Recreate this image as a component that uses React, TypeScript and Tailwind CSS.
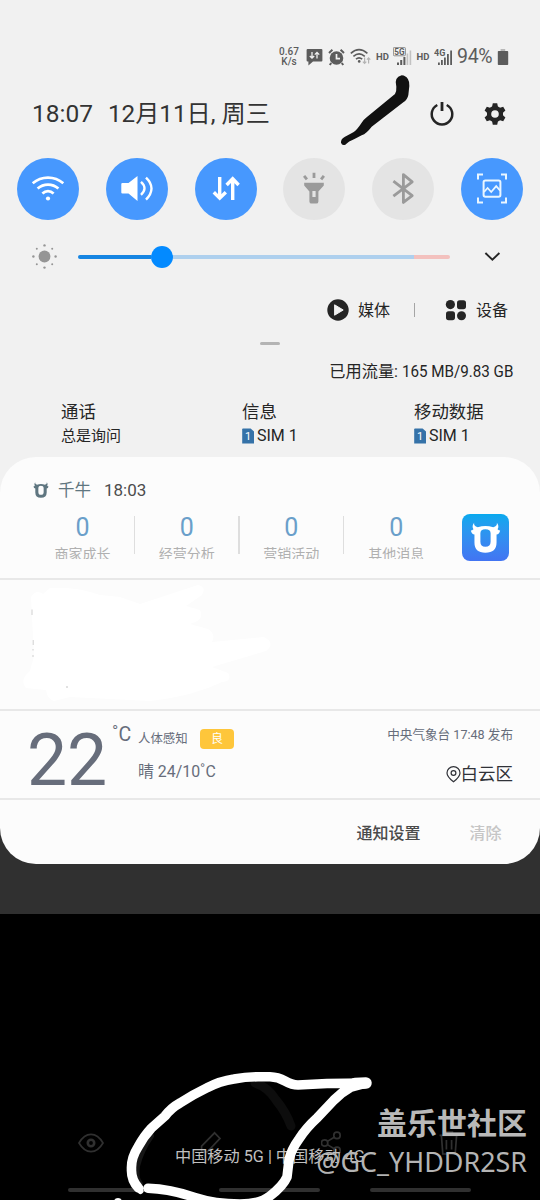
import type { ReactNode } from "react";

interface Toggle {
  name: string;
  active: boolean;
  icon: ReactNode;
}

const toggles: Toggle[] = [
  {
    name: "wifi",
    active: true,
    icon: (
      <svg width="36" height="36" viewBox="0 0 36 36" fill="none" stroke="#fff" strokeWidth="2.7">
        <path d="M2.7 12.3C11.5 4.6 24.5 4.6 33.3 12.3" />
        <path d="M7.6 17.6C13.6 12.2 22.4 12.2 28.4 17.6" />
        <path d="M12.4 22.6C15.8 19.4 20.2 19.4 23.6 22.6" />
        <circle cx="18" cy="27.5" r="2.1" fill="#fff" stroke="none" />
      </svg>
    ),
  },
  {
    name: "sound",
    active: true,
    icon: (
      <svg width="36" height="36" viewBox="0 0 36 36" fill="none" stroke="#fff" strokeWidth="2.4">
        <path d="M3.4 12H9.5L18.5 5V30L9.5 22.6H3.4Q2.3 22.6 2.3 21.5V13Q2.3 12 3.4 12Z" fill="#fff" stroke="none" />
        <path d="M22 10.8Q29 17.2 22 23.8" />
        <path d="M27 6.6Q38 17.2 27 28.6" />
      </svg>
    ),
  },
  {
    name: "data",
    active: true,
    icon: (
      <svg width="36" height="36" viewBox="0 0 36 36" fill="none" stroke="#fff" strokeWidth="3.4">
        <path d="M11.7 6V27M5.8 21.2L11.7 27.2L17.8 21.2" />
        <path d="M24.7 29V8M18.6 14L24.7 7.8L30.6 14" />
      </svg>
    ),
  },
  {
    name: "torch",
    active: false,
    icon: (
      <svg width="36" height="36" viewBox="0 0 36 36" fill="#9a9a9a">
        <path d="M8.2 11.8H27.8V14.4L22.4 20.6V30.4Q22.4 32.6 20.2 32.6H15.6Q13.4 32.6 13.4 30.4V20.6L8.2 14.4Z" />
        <rect x="16.4" y="20" width="3.2" height="6" fill="#e4e4e4" />
        <path d="M16.6 1.8H19.4V7H16.6ZM7 5.8L9.2 4L12 7.6L9.8 9.2ZM26.8 4L29 5.8L26.2 9.2L24 7.6Z" />
      </svg>
    ),
  },
  {
    name: "bluetooth",
    active: false,
    icon: (
      <svg width="36" height="36" viewBox="0 0 36 36" fill="none" stroke="#9a9a9a" strokeWidth="2.8">
        <path d="M8.4 10.2L27.2 24.6L18.4 31.4V3.6L27.2 10.8L8.4 25.2" strokeLinejoin="round" />
      </svg>
    ),
  },
  {
    name: "capture",
    active: true,
    icon: (
      <svg width="36" height="36" viewBox="0 0 36 36" fill="none" stroke="#eaf6ff" strokeWidth="2">
        <path d="M4 8.4V3.4H9M27 3.4H32V8.4M4 26.4V31.4H9M27 31.4H32V26.4" />
        <rect x="9.6" y="9.4" width="16.8" height="16.4" rx="1.8" />
        <path d="M10 21L13.6 17L17.2 21L22.2 15.2L26.2 19.6" strokeWidth="1.8" />
      </svg>
    ),
  },
];

const stats = ["商家成长", "经营分析", "营销活动", "其他消息"];

const SignalBars = ({ label, boxed }: { label: string; boxed?: boolean }) => (
  <svg width="20" height="20" viewBox="0 0 20 20" fill="#5c5c5c">
    {boxed ? (
      <>
        <path d="M4 15.5H6V18H4ZM7.2 13H9.2V18H7.2ZM10.4 10H12.4V18H10.4Z" />
        <path d="M13.6 6.5H15.2V18H13.6ZM16.6 3.5H18.2V18H16.6Z" fill="#c2c2c2" />
        <rect x="0.4" y="0.4" width="12" height="8.4" rx="1" fill="#f1f1f1" stroke="#777" strokeWidth="0.8" />
        <text x="1.3" y="7.6" fontSize="8.2" fontWeight="700">{label}</text>
      </>
    ) : (
      <>
        <text x="0" y="9" fontSize="9" fontWeight="700">{label}</text>
        <path d="M4 15.5H5.8V18H4ZM7 13H8.8V18H7ZM10 10.5H11.8V18H10ZM13 7H14.8V18H13ZM16.2 3.5H18V18H16.2Z" />
      </>
    )}
  </svg>
);

const StatusBar = () => (
  <div className="mt-[46px] flex h-[22px] items-center pl-[278px] text-[#5c5c5c]">
    <div className="w-[22px] text-center text-[10px] font-medium leading-[10px]">
      <div>0.67</div>
      <div>K/s</div>
    </div>
    <svg className="ml-[5.5px]" width="17" height="18" viewBox="0 0 17 18">
      <path d="M1.6 1H15.4Q16.4 1 16.4 2V12.4Q16.4 13.4 15.4 13.4H7L2.4 17.4V13.4H1.6Q0.6 13.4 0.6 12.4V2Q0.6 1 1.6 1Z" fill="#5c5c5c" />
      <path d="M6 4V10.2M3.8 8L6 10.2L8.2 8M11 10.4V4.4M8.8 6.6L11 4.4L13.2 6.6" stroke="#f1f1f1" strokeWidth="1.3" fill="none" />
    </svg>
    <svg className="ml-[5px]" width="17" height="18" viewBox="0 0 17 18">
      <circle cx="8.5" cy="10" r="6.8" fill="#5c5c5c" />
      <path d="M1 5L4.4 1.8M16 5L12.6 1.8M3.2 15L1.8 17M13.8 15L15.2 17" stroke="#5c5c5c" strokeWidth="2" />
      <path d="M8.5 6V10.6H12" stroke="#f1f1f1" strokeWidth="1.7" fill="none" />
    </svg>
    <svg className="ml-[5px]" width="21" height="18" viewBox="0 0 21 18" fill="none" stroke="#5c5c5c" strokeWidth="1.6">
      <path d="M0.8 5.4Q9 -2 17.4 5.4M3.4 8.4Q9 3.4 14.8 8.4M6 11.2Q9 8.4 12.2 11.2" />
      <circle cx="9.2" cy="13.4" r="1.3" fill="#5c5c5c" stroke="none" />
      <path d="M14.6 9.6V15.4M12.9 13.6L14.6 15.4L16.3 13.6M18.6 15.6V9.8M16.9 11.6L18.6 9.8L20.3 11.6" stroke="#b4b4b4" strokeWidth="1.2" />
    </svg>
    <span className="ml-[5.5px] w-[14px] text-[9.5px] font-bold leading-none">HD</span>
    <div className="ml-[2.5px]">
      <SignalBars label="5G" boxed />
    </div>
    <span className="ml-[4px] w-[14px] text-[9.5px] font-bold leading-none">HD</span>
    <div className="ml-[3px]">
      <SignalBars label="4G" />
    </div>
    <span className="ml-[3.5px] w-[37px] text-[19.5px] leading-none tracking-[-0.3px]">94%</span>
    <svg className="ml-[2.5px]" width="12" height="18" viewBox="0 0 12 18" fill="#5c5c5c">
      <rect x="3.6" y="1" width="4.6" height="2" fill="#b8b8b8" />
      <rect x="0.8" y="3" width="10.4" height="14" rx="0.8" />
    </svg>
  </div>
);

const GearIcon = () => (
  <svg width="24" height="24" viewBox="0 0 24 24">
    <path
      d="M9.8 1.2H14.2L14.9 4.5L17 5.7L20.2 4.7L22.4 8.5L20 10.8V13.2L22.4 15.5L20.2 19.3L17 18.3L14.9 19.5L14.2 22.8H9.8L9.1 19.5L7 18.3L3.8 19.3L1.6 15.5L4 13.2V10.8L1.6 8.5L3.8 4.7L7 5.7L9.1 4.5Z"
      fill="#252525"
      strokeLinejoin="round"
    />
    <circle cx="12" cy="12" r="7.8" fill="#252525" />
    <circle cx="12" cy="12" r="3.8" fill="#f1f1f1" />
  </svg>
);

const Header = () => (
  <div className="relative mt-[26px] flex h-10 items-center pl-[32px] leading-none text-[#333]">
    <span className="w-[76px] text-[24.5px]">18:07</span>
    <span className="w-[170px] whitespace-nowrap text-[24.2px]">12月11日, 周三</span>
    <svg className="ml-[151px]" width="26" height="26" viewBox="0 0 26 26" fill="none" stroke="#252525" strokeWidth="2.5">
      <path d="M8.3 4A10.3 10.3 0 1 0 17.7 4" />
      <path d="M13 1V10" strokeWidth="2.8" />
    </svg>
    <div className="ml-[28px]">
      <GearIcon />
    </div>
    <svg className="absolute left-[300px] top-[-24px]" width="130" height="80" viewBox="0 0 390 240">
      <path
        d="M305 16Q318 17 324 28Q329 36 328 48L325 75Q322 90 310 97L215 170Q200 190 185 196L165 206Q145 214 136 224Q126 228 123 218Q122 206 135 200L160 187Q172 178 185 158Q190 150 200 142L285 72Q290 62 289 50Q281 22 305 16Z"
        fill="#111"
      />
    </svg>
  </div>
);

const QuickToggles = () => (
  <div className="mt-[24px] flex justify-between px-[17px]">
    {toggles.map((toggle) => (
      <div
        key={toggle.name}
        className={`flex size-[62px] items-center justify-center rounded-full ${
          toggle.active ? "bg-[#4798fe]" : "bg-[#e4e4e4]"
        }`}
      >
        {toggle.icon}
      </div>
    ))}
  </div>
);

const Brightness = () => (
  <div className="mt-[21.5px] flex h-[30px] items-center pl-[31px]">
    <svg width="27" height="27" viewBox="0 0 27 27" fill="#959595">
      <circle cx="13.5" cy="13.5" r="5.9" />
      <circle cx="13.5" cy="2.4" r="1.2" />
      <circle cx="13.5" cy="24.6" r="1.2" />
      <circle cx="2.4" cy="13.5" r="1.2" />
      <circle cx="24.6" cy="13.5" r="1.2" />
      <circle cx="5.8" cy="5.8" r="1" />
      <circle cx="21.2" cy="5.8" r="1" />
      <circle cx="5.8" cy="21.2" r="1" />
      <circle cx="21.2" cy="21.2" r="1" />
    </svg>
    <div className="ml-[20px] flex w-[372px] items-center">
      <div className="h-1 w-[73px] rounded-l-full bg-[#1685e2]" />
      <div className="size-[22px] rounded-full bg-[#038aff]" />
      <div className="h-1 w-[241px] bg-[#aed0ee]" />
      <div className="h-1 w-[36px] rounded-r-full bg-[#f3c1be]" />
    </div>
    <svg className="ml-[34px]" width="17" height="11" viewBox="0 0 17 11" fill="none" stroke="#252525" strokeWidth="1.9">
      <path d="M1.4 2L8.4 8.8L15.4 2" />
    </svg>
  </div>
);

const MediaDevices = () => (
  <div className="mt-[26.5px] flex h-[24px] items-center pl-[327px] text-[16px] leading-none text-[#252525]">
    <svg width="22" height="22" viewBox="0 0 22 22">
      <circle cx="11" cy="11" r="10.7" fill="#252525" />
      <path d="M7.6 5.8V16.2L16.2 11Z" fill="#f1f1f1" stroke="#f1f1f1" strokeLinejoin="round" />
    </svg>
    <span className="ml-[9px] w-[32px] pt-[2px]">媒体</span>
    <div className="ml-[24px] h-[14px] w-px bg-[#a5a5a5]" />
    <svg className="ml-[30px]" width="22" height="22" viewBox="0 0 22 22" fill="#252525">
      <circle cx="5.4" cy="5.6" r="4.6" />
      <rect x="12" y="1.2" width="9" height="9" rx="2.6" />
      <rect x="1" y="12.2" width="9" height="9" rx="2.6" />
      <circle cx="16.5" cy="16.8" r="4.5" />
    </svg>
    <span className="ml-[9px] pt-[2px]">设备</span>
  </div>
);

const SimBadge = () => (
  <svg className="mr-[3px]" width="12" height="16" viewBox="0 0 12 16">
    <path d="M1 0.4H8.6L12 3.6V15.6H0.2V1.2Q0.2 0.4 1 0.4Z" fill="#3572a8" />
    <text x="3" y="12" fontSize="11" fill="#fff">1</text>
  </svg>
);

const SimInfo = () => (
  <div className="mt-[16px] flex h-[57px] pl-[61px] text-[#252525]">
    <div className="w-[181px]">
      <div className="h-[24px] text-[17.4px] leading-[24px]">通话</div>
      <div className="text-[15px] leading-[24px]">总是询问</div>
    </div>
    <div className="w-[172px]">
      <div className="h-[24px] text-[17.4px] leading-[24px]">信息</div>
      <div className="flex items-center text-[16px] leading-[24px]">
        <SimBadge />
        SIM 1
      </div>
    </div>
    <div>
      <div className="h-[24px] text-[17.4px] leading-[24px]">移动数据</div>
      <div className="flex items-center text-[16px] leading-[24px]">
        <SimBadge />
        SIM 1
      </div>
    </div>
  </div>
);

const BullMark = ({ size, color }: { size: number; color: string }) => (
  <svg width={size} height={size} viewBox="0 0 91 94">
    <path
      fillRule="evenodd"
      fill={color}
      d="M11 2Q9 12 22 16Q45 8 69 16Q82 12 80 2Q88 12 82 22Q86 26 90 26Q87 38 79 38V62Q79 93 45 93Q12 93 12 62V38Q4 38 1 26Q5 26 9 22Q3 12 11 2ZM45 22Q30 22 30 34V60Q30 75 45 75Q61 75 61 60V34Q61 22 45 22Z"
    />
  </svg>
);

const QianniuNotice = () => (
  <div className="h-[123px] border-b-2 border-[#e8e8e8] pt-[22px]">
    <div className="flex h-[22px] items-center pl-[33px] leading-none">
      <BullMark size={16} color="#5f7680" />
      <span className="ml-[9px] w-[46px] pt-[2px] text-[16.5px] text-[#5f7680]">千牛</span>
      <span className="text-[17px] text-[#4c4c4c]">18:03</span>
    </div>
    <div className="mt-[13px] flex pl-[31px]">
      <div className="flex h-[45px] overflow-hidden">
        {stats.map((label, index) => (
          <div key={label} className="flex w-[104.4px]">
            <div className="flex-1 text-center">
              <div className="pt-px text-[25px] leading-[25px] text-[#6a9fca]">0</div>
              <div className="mt-[4px] text-[14px] leading-[20px] text-[#b0b0b0]">{label}</div>
            </div>
            {index < stats.length - 1 && <div className="mt-[2px] h-[38px] w-[1.5px] bg-[#dedede]" />}
          </div>
        ))}
      </div>
      <div className="ml-[13px] flex size-[47px] items-center justify-center rounded-[8px] bg-linear-to-b from-[#06a9ee] to-[#4274f2]">
        <BullMark size={31} color="#fff" />
      </div>
    </div>
  </div>
);

// Notice hidden behind a white marker scribble
const HiddenNotice = () => (
  <div className="h-[131px] border-b-2 border-[#e8e8e8]">
    <svg width="300" height="129" viewBox="0 580 300 129" fill="#fff">
      <path d="M31 597Q36 589 43 594L50 588Q75 586 100 595L120 597L140 604L198 585Q207 587 202 595L186 606L200 610Q205 620 190 624L208 629Q216 634 212 642L264 637Q276 643 266 651L212 667L228 673Q233 681 222 682L208 688Q180 698 150 701L70 697L54 701Q47 699 46 690L26 688Q19 680 30 671L34 656Z" />
      <path d="M32 609.5V615M33.2 640V645M33 649V650.5M33 655V657" stroke="#d0d0d0" strokeWidth="1" />
      <path d="M66 687H68" stroke="#c4c4c4" />
    </svg>
  </div>
);

const Weather = () => (
  <div className="flex h-[89px] border-b-2 border-[#e8e8e8] text-[#676d7b]">
    <div className="w-[84px] pl-[27px] pt-[14px] text-[71.5px] leading-[72px] tracking-[-0.3px]">22</div>
    <div className="ml-[28px] w-[26px] pt-[13px] text-[19.5px] leading-[22px]">˚C</div>
    <div className="w-[200px] pt-[17px]">
      <div className="flex h-[21px] items-center text-[12.4px] leading-none">
        <span className="w-[62px] pt-px">人体感知</span>
        <span className="flex h-[20px] w-[34px] items-center justify-center rounded-[4px] bg-[#fec63b] text-[12px] text-white">良</span>
      </div>
      <div className="mt-[13px] text-[15.9px] leading-[20px]">晴 24/10˚C</div>
    </div>
    <div className="flex flex-1 flex-col items-end pr-[27px] pt-[14px]">
      <div className="whitespace-nowrap text-[12.6px] leading-[20px]">中央气象台 17:48 发布</div>
      <div className="mt-[19px] flex items-center text-[17.5px] leading-[20px] text-[#303238]">
        <svg width="15" height="17" viewBox="0 0 15 17" fill="none" stroke="#303238" strokeWidth="1.2">
          <path d="M7.5 15.8Q1 10.6 1 6.9A6.5 6.2 0 0 1 14 6.9Q14 10.6 7.5 15.8Z" />
          <circle cx="7.5" cy="7" r="2.4" />
        </svg>
        白云区
      </div>
    </div>
  </div>
);

const NotificationCard = () => (
  <div className="bg-[linear-gradient(#f1f1f1_50%,#303030_50%)]">
    <div className="h-[407px] overflow-hidden rounded-[36px] bg-[#fcfcfc]">
      <QianniuNotice />
      <HiddenNotice />
      <Weather />
      <div className="flex h-[64px] items-center justify-end gap-[49px] pr-[38.5px] pt-[3px] text-[16px] font-medium leading-none">
        <span className="text-[#4a4a4a]">通知设置</span>
        <span className="text-[#c6c6c6]">清除</span>
      </div>
    </div>
  </div>
);

const BottomBar = () => (
  <div className="relative flex-1 bg-black">
    <div className="flex items-center justify-between pl-[78px] pr-[81px] pt-[216px]">
      <svg width="26" height="26" viewBox="0 0 26 26" fill="none" stroke="#303030" strokeWidth="1.7">
        <path d="M1 13Q6 4.4 13 4.4T25 13Q20 21.6 13 21.6T1 13Z" />
        <circle cx="13" cy="13" r="3.2" strokeWidth="2.6" />
      </svg>
      <svg width="24" height="26" viewBox="0 0 24 26" fill="none" stroke="#303030" strokeWidth="1.7">
        <path d="M14.6 2.8L20 8.4L7.2 22H1.6V16.2Z" />
      </svg>
      <svg width="22" height="26" viewBox="0 0 22 26" fill="none" stroke="#303030" strokeWidth="1.7">
        <circle cx="16" cy="5.4" r="3.2" />
        <circle cx="3.6" cy="13" r="3.2" />
        <circle cx="16" cy="20.4" r="3.2" />
        <path d="M6.4 11.4L13.2 7.2M6.4 14.6L13.2 18.8" />
      </svg>
      <svg width="20" height="26" viewBox="0 0 20 26" fill="none" stroke="#303030" strokeWidth="1.7">
        <path d="M0.6 5.4H19.4M6.6 5V2H13.4V5M2.4 5.4L3.8 24H16.2L17.6 5.4M7.4 10V19.6M12.6 10V19.6" />
      </svg>
    </div>
    <div className="flex gap-[50px] pl-[68px] pt-[32px]">
      <div className="h-1 w-[101px] rounded-full bg-[#303030]" />
      <div className="h-1 w-[101px] rounded-full bg-[#303030]" />
      <div className="h-1 w-[101px] rounded-full bg-[#303030]" />
    </div>
    <div className="absolute left-[175px] top-[231px] whitespace-nowrap text-[16.2px] leading-[24px] text-[#c0c0c0]">
      中国移动 5G | 中国移动 4G
    </div>
    <svg
      className="absolute left-0 top-[136px]"
      width="540"
      height="150"
      viewBox="0 1050 540 150"
      fill="none"
      stroke="#fff"
      strokeLinecap="round"
      strokeLinejoin="round"
    >
      <path d="M255 1083Q268 1087 276 1100Q286 1112 291 1126" stroke="#0d0d0d" strokeWidth="9" />
      <path d="M140 1184Q135 1178 137 1166Q141 1150 151 1136" stroke="#161616" strokeWidth="6" />
      <path
        d="M138.5 1188Q131 1180 131.5 1169Q131 1158 138 1147Q144 1136 151.5 1128L165 1116Q171 1108 180 1103Q194 1094 206.6 1088Q220 1081 234 1079Q246 1076.8 258 1076.8H270Q278 1077 285 1081Q292 1085 298 1085L327 1083.5L366 1083L351 1087Q342 1092 334 1100L317 1118Q306 1128 299 1139Q291 1150 289 1160L287 1177Q283 1186 270 1196Q260 1204 240 1204Q215 1204 195 1197.5Q170 1189 148 1188.3"
        strokeWidth="9.6"
      />
      <path d="M138.5 1188L140.5 1191" strokeWidth="6" />
      <path d="M355 1083.5L366 1083" strokeWidth="11.5" />
      <circle cx="118" cy="1202" r="4" fill="#fff" stroke="none" />
    </svg>
    <div className="absolute right-[13px] top-[191px] text-[30px] font-bold leading-[38px] text-[#b9b9b9]">盖乐世社区</div>
    <div className="absolute right-[13px] top-[230px] font-['Noto_Sans'] text-[26.9px] leading-[36px] text-[#b4b4b4]">
      @GC_YHDDR2SR
    </div>
  </div>
);

export default function App() {
  return (
    <div className="flex h-[1200px] w-[540px] flex-col overflow-hidden bg-[#f1f1f1] font-[Roboto,'Noto_Sans_CJK_SC',sans-serif]">
      <StatusBar />
      <Header />
      <QuickToggles />
      <Brightness />
      <MediaDevices />
      <div className="ml-[260px] mt-[20px] h-[2.5px] w-[20px] rounded-full bg-[#b4b4b4]" />
      <div className="mt-[15.5px] flex h-[24px] items-center justify-end pr-[28px] text-[16.2px] leading-none text-[#252525]">
        <span className="pt-px">已用流量:</span>
        <span className="-ml-[7px] w-[121px] origin-right scale-x-[0.91] whitespace-nowrap text-right text-[16.7px]">
          165 MB/9.83 GB
        </span>
      </div>
      <SimInfo />
      <NotificationCard />
      <div className="h-[50px] bg-[#303030]" />
      <BottomBar />
    </div>
  );
}
